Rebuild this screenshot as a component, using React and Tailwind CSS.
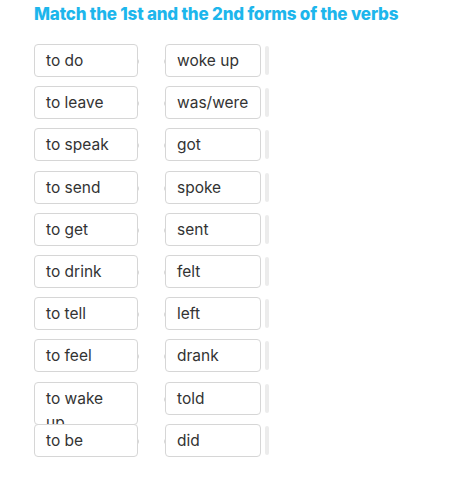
import React from 'react';

const pairs = [
  ['to do', 'woke up'],
  ['to leave', 'was/were'],
  ['to speak', 'got'],
  ['to send', 'spoke'],
  ['to get', 'sent'],
  ['to drink', 'felt'],
  ['to tell', 'left'],
  ['to feel', 'drank'],
  ['to wake up', 'told'],
  ['to be', 'did'],
];

function Nub({ side }) {
  return (
    <span
      className={
        'absolute top-[14px] h-[5px] w-[2px] bg-[#d8d8d8] ' +
        (side === 'right' ? 'right-[-2px] rounded-r' : 'left-[-2px] rounded-l')
      }
    />
  );
}

export default function App() {
  return (
    <div className="min-h-screen bg-white pl-[34px] pt-[3px]" style={{ fontFamily: 'Inter, "Open Sans", sans-serif' }}>
      <h1 className="text-[17px] font-extrabold leading-[22px] tracking-[-0.2px] text-[#1db6ec]">
        Match the 1st and the 2nd forms of the verbs
      </h1>
      <div className="mt-[19px] flex flex-col">
        {pairs.map(([a, b], i) => (
          <div key={i} className="relative flex h-[42.2px] items-start" style={{ zIndex: i }}>
            <div
              className={
                'relative w-[104px] rounded border border-[#d6d6d6] bg-white px-[11px] text-[15.5px] text-[#333] ' +
                (a === 'to wake up' ? 'h-[43px] overflow-hidden pt-[4px] leading-[24px]' : 'h-[33px] leading-[31px]')
              }
            >
              <span className={a === 'to wake up' ? 'block w-[70px]' : ''}>{a}</span>
              <Nub side="right" />
            </div>
            <div className="relative ml-[27px] h-[33px] w-[96px] rounded border border-[#d6d6d6] bg-white px-[11px] text-[15.5px] leading-[31px] text-[#333]">
              {b}
              <Nub side="left" />
            </div>
            <div className="ml-[4px] mt-[2px] h-[29px] w-[4px] rounded bg-[#ececec]" />
          </div>
        ))}
      </div>
    </div>
  );
}
